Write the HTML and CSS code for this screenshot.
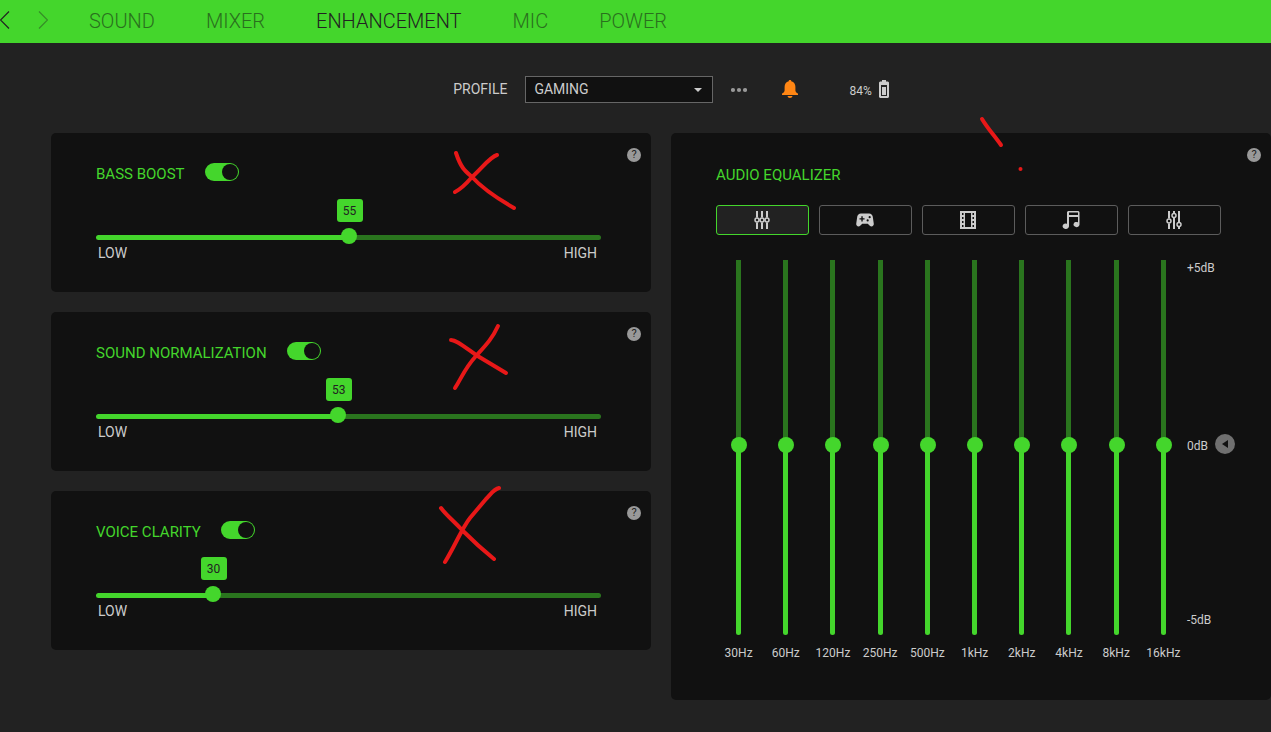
FILE: index.html
```html
<!DOCTYPE html>
<html lang="en">
<head>
<meta charset="utf-8">
<title>Audio Enhancement</title>
<link rel="stylesheet" href="styles.css">
</head>
<body>
<header class="topbar">
  <button class="history" aria-label="Back"><svg width="10" height="18" viewBox="0 0 10 18"><path d="M9 .5.5 9 9 17.5"/></svg></button>
  <button class="history next" aria-label="Forward" disabled><svg width="10" height="18" viewBox="0 0 10 18"><path d="M1 .5 9.500 9 1 17.500"/></svg></button>
  <nav class="tabs">
    <a href="#">SOUND</a>
    <a href="#">MIXER</a>
    <a href="#" class="active" aria-current="page">ENHANCEMENT</a>
    <a href="#">MIC</a>
    <a href="#">POWER</a>
  </nav>
</header>

<main class="main">
  <div class="profile">
    <label for="profile">PROFILE</label>
    <div class="select-wrap">
      <select id="profile"><option>GAMING</option></select>
      <svg class="caret" width="8" height="4" viewBox="0 0 8 4"><path d="M0 0h8L4 4z"/></svg>
    </div>
    <button class="more" aria-label="More options"><svg width="16" height="6" viewBox="0 0 16 6"><circle cx="2" cy="3" r="2.100"/><circle cx="8" cy="3" r="2.100"/><circle cx="14" cy="3" r="2.100"/></svg></button>
    <button class="alert" aria-label="Notifications"><svg width="16" height="18" viewBox="0 0 16 18"><path d="M8 0c.8 0 1.300.5 1.300 1.200C12 1.900 13.400 4 13.400 6.800v3.400c0 1.400.8 2.500 2.600 3.300V15H0v-1.500c1.800-.8 2.600-1.900 2.600-3.300V6.800C2.600 4 4 1.900 6.700 1.200 6.700.5 7.200 0 8 0zM5.500 16h5c-.2 1.300-1.200 2-2.500 2s-2.300-.7-2.500-2z"/></svg></button>
    <div class="battery"><span>84%</span>
      <svg width="10" height="18" viewBox="0 0 10 18"><path fill-rule="evenodd" d="M3 0h4v1.500h2l1 1V17l-1 1H1l-1-1V2.500l1-1h2zM2 5v11h6V5z"/><path d="M3 7h4v8H3z"/></svg>
    </div>
  </div>

  <div class="panels">
    <div class="column">
      <section class="card">
        <button class="help" aria-label="About bass boost">?</button>
        <div class="card-head"><label for="bass-on">BASS BOOST</label><input class="toggle" id="bass-on" type="checkbox" checked></div>
        <div class="level" style="--v:0.5">
          <output for="bass">55</output>
          <input id="bass" type="range" min="10" max="100" value="55" aria-label="Bass boost level">
          <div class="ends"><span>LOW</span><span>HIGH</span></div>
        </div>
      </section>
      <section class="card">
        <button class="help" aria-label="About sound normalization">?</button>
        <div class="card-head"><label for="norm-on">SOUND NORMALIZATION</label><input class="toggle" id="norm-on" type="checkbox" checked></div>
        <div class="level" style="--v:0.478">
          <output for="norm">53</output>
          <input id="norm" type="range" min="10" max="100" value="53" aria-label="Sound normalization level">
          <div class="ends"><span>LOW</span><span>HIGH</span></div>
        </div>
      </section>
      <section class="card">
        <button class="help" aria-label="About voice clarity">?</button>
        <div class="card-head"><label for="voice-on">VOICE CLARITY</label><input class="toggle" id="voice-on" type="checkbox" checked></div>
        <div class="level" style="--v:0.222">
          <output for="voice">30</output>
          <input id="voice" type="range" min="10" max="100" value="30" aria-label="Voice clarity level">
          <div class="ends"><span>LOW</span><span>HIGH</span></div>
        </div>
      </section>
    </div>

    <section class="card equalizer">
      <button class="help" aria-label="About the equalizer">?</button>
      <h2 class="card-head">AUDIO EQUALIZER</h2>
      <div class="presets">
        <button class="selected" aria-label="Default"><svg width="18" height="18" viewBox="0 0 18 18"><path class="line" d="M4 0v6.500M4 11.500V18M9 0v6.500M9 11.500V18M14 0v6.500M14 11.500V18"/><g class="ring"><circle cx="4" cy="9" r="2"/><circle cx="9" cy="9" r="2"/><circle cx="14" cy="9" r="2"/></g></svg></button>
        <button aria-label="Game"><svg width="22" height="22" viewBox="0 0 24 24"><path d="M21.580 16.090l-1.090-7.660C20.210 6.460 18.520 5 16.530 5H7.470C5.480 5 3.790 6.460 3.510 8.430l-1.090 7.660C2.200 17.630 3.390 19 4.940 19c.68 0 1.320-.27 1.800-.75L9 16h6l2.250 2.250c.48.48 1.130.75 1.800.75 1.560 0 2.750-1.370 2.530-2.910zM11.500 11.500H9.500v2H8v-2H6V10h2V8h1.500v2h2zM14.900 13.700a1.200 1.200 0 1 1 0-2.400 1.200 1.200 0 0 1 0 2.400zm2.200-3.600a1.200 1.200 0 1 1 0-2.400 1.200 1.200 0 0 1 0 2.400z"/></svg></button>
        <button aria-label="Movie"><svg width="16" height="18" viewBox="0 0 16 18"><path fill-rule="evenodd" d="M0 0h16v18H0zM5 2v14h6V2zM2 2v2h1.500V2zM2 6v2h1.500V6zM2 10v2h1.500v-2zM2 14v2h1.500v-2zM12.500 2v2H14V2zM12.500 6v2H14V6zM12.500 10v2H14v-2zM12.500 14v2H14v-2z"/></svg></button>
        <button aria-label="Music"><svg width="18" height="18" viewBox="0 0 18 18"><path fill-rule="evenodd" d="M6 0h10.500l1 1v12.500a3 2.600 0 1 1-1.500-2.200V6H7v9.300A3.200 2.700 0 1 1 5 12.800V1zM7 1.500V4h9V1.500z"/></svg></button>
        <button aria-label="Custom"><svg width="18" height="18" viewBox="0 0 18 18"><path class="line" d="M4 0v7.500M4 12.500V18M9 0v2M9 7v11M14 0v11M14 16v2"/><g class="ring"><circle cx="4" cy="10" r="2"/><circle cx="9" cy="4.500" r="2"/><circle cx="14" cy="13.500" r="2"/></g></svg></button>
      </div>
      <div class="eq">
        <label class="band"><input type="range" min="-5.15" max="5" step="0.05" value="0"><span>30Hz</span></label>
        <label class="band"><input type="range" min="-5.15" max="5" step="0.05" value="0"><span>60Hz</span></label>
        <label class="band"><input type="range" min="-5.15" max="5" step="0.05" value="0"><span>120Hz</span></label>
        <label class="band"><input type="range" min="-5.15" max="5" step="0.05" value="0"><span>250Hz</span></label>
        <label class="band"><input type="range" min="-5.15" max="5" step="0.05" value="0"><span>500Hz</span></label>
        <label class="band"><input type="range" min="-5.15" max="5" step="0.05" value="0"><span>1kHz</span></label>
        <label class="band"><input type="range" min="-5.15" max="5" step="0.05" value="0"><span>2kHz</span></label>
        <label class="band"><input type="range" min="-5.15" max="5" step="0.05" value="0"><span>4kHz</span></label>
        <label class="band"><input type="range" min="-5.15" max="5" step="0.05" value="0"><span>8kHz</span></label>
        <label class="band"><input type="range" min="-5.15" max="5" step="0.05" value="0"><span>16kHz</span></label>
        <div class="scale">
          <span>+5dB</span>
          <div class="zero"><span>0dB</span><button aria-label="Reset to 0dB"><svg width="6" height="8" viewBox="0 0 6 8"><path d="M6 0v8L0 4z"/></svg></button></div>
          <span>-5dB</span>
        </div>
      </div>
    </section>
  </div>
</main>

<svg class="ink" width="1271" height="732" viewBox="0 0 1271 732" aria-hidden="true">
  <path d="M456 153C461 168 465 171 472 177C482 188 500 200 514 208M497 155C490 157 483 167 472 177C466 184 461 189 455 192"/>
  <path d="M451 340C456 340 462 345 476 355L506 373M498 326C492 339 486 345 476 356C465 368 462 377 455 388"/>
  <path d="M441 508C447 516 453 520 462 530Q478 546 494 559M499 488C494 489 491 494 486 499L470 518C462 528 455 546 445 562"/>
  <path d="M982 119C988 129 994 135 1001 145"/>
  <circle cx="1020.500" cy="169" r="2"/>
</svg>
</body>
</html>
```

FILE: styles.css
```css
* { box-sizing: border-box; }

:root {
  --green: #44d62c;
  --green-dim: #2a751e;
  --panel: #111;
  --text: #ccc;
}

body {
  margin: 0;
  min-height: 100vh;
  background: #222;
  color: var(--text);
  font: 14px/16px Roboto, "Liberation Sans", sans-serif;
}

button {
  padding: 0;
  border: 0;
  background: none;
  color: inherit;
  font: inherit;
  display: flex;
  align-items: center;
  justify-content: center;
}

svg { display: block; fill: currentColor; }

.topbar {
  display: flex;
  align-items: center;
  height: 43px;
  background: var(--green);
  color: #222;
}
.history { padding-bottom: 4px; }
.history.next { margin-left: 28px; opacity: 0.4; }
.history path { fill: none; stroke: #222; stroke-width: 1.2; }
.tabs {
  display: flex;
  gap: 51px;
  margin-left: 41px;
  padding-bottom: 2px;
  font-size: 20px;
  line-height: 24px;
  font-weight: 300;
}
.tabs a { color: #2a701e; text-decoration: none; }
.tabs .active { color: #222; }

.main { padding: 33px 0 32px 51px; }

.profile {
  display: flex;
  align-items: center;
  justify-content: center;
  padding-left: 20px;
  margin-bottom: 30px;
}
.profile label { padding-bottom: 1px; }
.select-wrap { position: relative; margin: 0 18px; }
.select-wrap select {
  display: block;
  appearance: none;
  width: 188px;
  height: 27px;
  padding: 0 8px 2px;
  border: 1px solid #666;
  border-radius: 0;
  background: var(--panel);
  color: var(--text);
  font: inherit;
}
.caret { position: absolute; top: 12px; right: 11px; pointer-events: none; }
.more { color: #999; }
.alert { margin: 0 51px 0 35px; padding-bottom: 2px; color: #ff8614; }
.battery { display: flex; align-items: center; gap: 7px; padding-bottom: 2px; font-size: 12px; }
.battery span { padding-top: 4px; }

.panels { display: grid; grid-template-columns: 1fr 1fr; gap: 20px; align-items: start; }
.column { display: grid; gap: 20px; }

.card {
  position: relative;
  padding: 30px 50px 30px 45px;
  border-radius: 5px;
  background: var(--panel);
}
.card-head {
  display: flex;
  align-items: center;
  gap: 20px;
  margin: 0;
  color: var(--green);
  font-size: 15px;
  line-height: 18px;
  font-weight: 400;
}
.card-head label { padding-top: 4px; line-height: 14px; }
.help {
  position: absolute;
  top: 15px;
  right: 10px;
  width: 14px;
  height: 14px;
  border-radius: 50%;
  background: #999;
  color: #222;
  font-size: 11px;
}

.toggle {
  appearance: none;
  width: 34px;
  height: 18px;
  margin: 0;
  padding: 1px;
  border-radius: 9px;
  background: #333;
}
.toggle::before {
  content: "";
  display: block;
  width: 16px;
  height: 16px;
  border-radius: 50%;
  background: var(--panel);
}
.toggle:checked { background: var(--green); }
.toggle:checked::before { margin-left: auto; }

.level { position: relative; padding-top: 47px; }
.level output {
  position: absolute;
  top: 18px;
  left: calc(9px + (100% - 16px) * var(--v));
  width: 26px;
  height: 23px;
  transform: translateX(-50%);
  border-radius: 3px;
  background: var(--green);
  color: #222;
  font-size: 12px;
  line-height: 24px;
  text-align: center;
}
.level input {
  display: block;
  appearance: none;
  width: 100%;
  height: 19px;
  margin: 0;
  background: none;
}
.level input::-webkit-slider-runnable-track {
  height: 5px;
  border-radius: 3px;
  background: linear-gradient(to right, var(--green) calc(8px + (100% - 16px) * var(--v)), var(--green-dim) 0);
}
.level input::-webkit-slider-thumb {
  appearance: none;
  width: 16px;
  height: 16px;
  margin-top: -7px;
  border-radius: 50%;
  background: var(--green);
}
.ends { display: flex; justify-content: space-between; padding: 0 4px 2px 2px; line-height: 13px; }

.equalizer { padding-top: 33px; padding-bottom: 39px; }
.presets { display: grid; grid-template-columns: repeat(5, 1fr); gap: 10px; margin: 21px 0 25px; }
.presets button { height: 30px; padding-right: 2px; border: 1px solid #5c5c5c; border-radius: 3px; }
.presets .selected { border-color: var(--green); background: #222; }
.presets .line { fill: none; stroke: currentColor; stroke-width: 2; }
.presets .ring { fill: none; stroke: currentColor; stroke-width: 1.5; }

.eq {
  display: grid;
  grid-template-columns: repeat(10, 1fr) 48px;
  margin: 0 -14px 0 -1px;
  font-size: 12px;
}
.band { display: flex; flex-direction: column; align-items: center; gap: 10px; min-width: 0; }
.band input {
  appearance: none;
  writing-mode: vertical-lr;
  direction: rtl;
  width: 16px;
  height: 375px;
  margin: 0;
  background: none;
}
.band input::-webkit-slider-runnable-track {
  width: 5px;
  border-radius: 0 0 3px 3px;
  background: linear-gradient(to top, var(--green) 50%, var(--green-dim) 0);
}
.band input::-webkit-slider-thumb {
  appearance: none;
  width: 16px;
  height: 16px;
  margin-left: -5px;
  border-radius: 50%;
  background: var(--green);
}
.scale {
  display: flex;
  flex-direction: column;
  justify-content: space-between;
  height: 368px;
}
.zero { display: flex; align-items: center; justify-content: space-between; }
.zero span { padding-top: 4px; }
.zero button { width: 20px; height: 20px; border-radius: 50%; background: #707070; color: var(--panel); }

.ink { position: absolute; top: 0; left: 0; pointer-events: none; }
.ink path { fill: none; stroke: #e81818; stroke-width: 4; stroke-linecap: round; stroke-linejoin: round; }
.ink circle { fill: #e81818; }
```
